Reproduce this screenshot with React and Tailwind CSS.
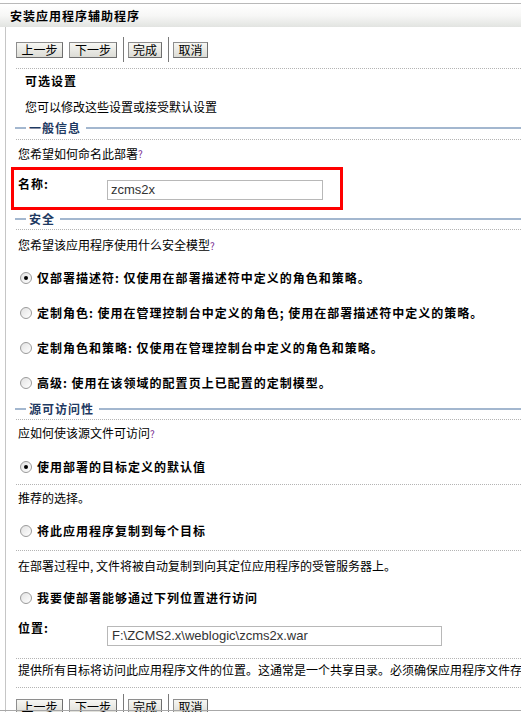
import React from "react";

const cjk = { fontFamily: '"Noto Sans CJK SC", "Noto Sans", sans-serif' };

function Btn({ label, w }) {
  return (
    <button
      className={`h-[16px] ${w} border border-[#8e8e8e] border-r-[#6e6e6e] border-b-[#6e6e6e] bg-gradient-to-b from-[#f7f7f3] to-[#dcdcd6] text-[12px] leading-[14px] text-black flex items-center justify-center`}
    >
      {label}
    </button>
  );
}

function ButtonBar() {
  return (
    <div className="flex items-center h-[25px]">
      <Btn label="上一步" w="w-[47px]" />
      <div className="w-[6px]" />
      <Btn label="下一步" w="w-[48px]" />
      <div className="w-[1px] h-[25px] bg-[#7a7a7a] ml-[6px] mr-[4px]" />
      <Btn label="完成" w="w-[34px]" />
      <div className="w-[1px] h-[25px] bg-[#7a7a7a] ml-[6px] mr-[4px]" />
      <Btn label="取消" w="w-[35px]" />
    </div>
  );
}

function Dotted() {
  return <div className="border-t border-dotted border-[#b4b4b4] h-0" />;
}

function Section({ title }) {
  return (
    <div className="flex items-center h-[16px] -ml-[1px]">
      <div className="w-[11px] h-[2px] bg-[#a3b7cf]" />
      <span className="ml-[3px] mr-[5px] font-bold text-[12px] tracking-[1px] text-[#1f3a62]">
        {title}
      </span>
      <div className="flex-1 h-[2px] bg-[#a3b7cf]" />
    </div>
  );
}

function Help() {
  return <span className="text-[10px] text-[#7a2f92]">?</span>;
}

function Radio({ checked, label, h }) {
  return (
    <div className={`flex items-center ${h} pl-[4px]`}>
      <span className="w-[12px] h-[12px] rounded-full border border-[#9a9a9a] bg-gradient-to-br from-[#e2e2e2] to-white flex items-center justify-center">
        {checked && <span className="w-[4px] h-[4px] rounded-full bg-black" />}
      </span>
      <span className="ml-[5px] font-bold text-[12px] tracking-[1px] text-black whitespace-nowrap">
        {label}
      </span>
    </div>
  );
}

function Text({ children, h, cls = "" }) {
  return (
    <div className={`flex items-center ${h} pl-[2px] text-[12px] text-black whitespace-nowrap ${cls}`}>
      {children}
    </div>
  );
}

export default function App() {
  return (
    <div className="w-[521px] h-[712px] overflow-hidden bg-white relative" style={cjk}>
      {/* title bar */}
      <div className="mt-[3px] border-t border-[#b9b9b9] h-[24px] bg-gradient-to-b from-white via-[#f7f7f6] to-[#e2e4e1] flex items-center pl-[10px]">
        <span className="font-bold text-[12px] tracking-[1px] text-black">安装应用程序辅助程序</span>
      </div>

      <div className="ml-[5px] border-l border-[#c6c6c6] pl-[10px] h-[685px]">
        <div className="pt-[10px]">
          <ButtonBar />
        </div>
        <div className="mt-[6px]">
          <Dotted />
        </div>
        <div className="h-[24px] flex items-center pl-[9px] font-bold text-[12px] tracking-[1px]">可选设置</div>
        <div className="h-[26px] flex items-center pl-[9px] text-[12px] mt-[1px]">您可以修改这些设置或接受默认设置</div>

        {/* 一般信息 */}
        <Section title="一般信息" />
        <div className="mt-[3px]">
          <Dotted />
        </div>
        <Text h="h-[27px]">
          您希望如何命名此部署<Help />
        </Text>
        <div className="-ml-[5px] w-[332px] h-[43px] border-[3px] border-[#ff0000] flex items-start pl-[4px] pt-[8px]">
          <span className="w-[89px] font-bold text-[12px] leading-[12px] tracking-[1px]">名称:</span>
          <div className="mt-[2px] w-[216px] h-[20px] border border-[#b8b8b8] flex items-center pl-[3px]">
            <span className="text-[13px] text-[#333]" style={{ fontFamily: '"Liberation Sans", Arial, sans-serif' }}>
              zcms2x
            </span>
          </div>
        </div>

        {/* 安全 */}
        <div className="mt-[1px]">
          <Section title="安全" />
        </div>
        <div className="mt-[2px]">
          <Dotted />
        </div>
        <Text h="h-[30px]">
          您希望该应用程序使用什么安全模型<Help />
        </Text>
        <Radio h="h-[35px]" checked label="仅部署描述符: 仅使用在部署描述符中定义的角色和策略。" />
        <Radio h="h-[35px]" label="定制角色: 使用在管理控制台中定义的角色; 使用在部署描述符中定义的策略。" />
        <Radio h="h-[35px]" label="定制角色和策略: 仅使用在管理控制台中定义的角色和策略。" />
        <Radio h="h-[35px]" label="高级: 使用在该领域的配置页上已配置的定制模型。" />

        {/* 源可访问性 */}
        <div className="mt-[1px]">
          <Section title="源可访问性" />
        </div>
        <div className="mt-[2px]">
          <Dotted />
        </div>
        <Text h="h-[26px]">
          应如何使该源文件可访问<Help />
        </Text>
        <div className="pt-[4px]">
          <Radio h="h-[34px]" checked label="使用部署的目标定义的默认值" />
        </div>
        <Dotted />
        <Text h="h-[26px]">推荐的选择。</Text>
        <Radio h="h-[39px]" label="将此应用程序复制到每个目标" />
        <Dotted />
        <Text h="h-[30px]">在部署过程中, 文件将被自动复制到向其定位应用程序的受管服务器上。</Text>
        <Radio h="h-[34px]" label="我要使部署能够通过下列位置进行访问" />
        <div className="h-[43px] flex items-start pl-[2px] pt-[7px]">
          <span className="w-[89px] font-bold text-[12px] leading-[12px] tracking-[1px]">位置:</span>
          <div className="mt-[4px] w-[335px] h-[20px] border border-[#b8b8b8] flex items-center pl-[4px]">
            <span className="text-[13px] text-[#333]" style={{ fontFamily: '"Liberation Sans", Arial, sans-serif' }}>
              F:\ZCMS2.x\weblogic\zcms2x.war
            </span>
          </div>
        </div>
        <Dotted />
        <Text h="h-[28px]" cls="pb-[6px]">
          提供所有目标将访问此应用程序文件的位置。这通常是一个共享目录。必须确保应用程序文件存在于此位置, 并且每个目标都可以访问该位置。
        </Text>
        <Dotted />
        <div className="mt-[6px]">
          <ButtonBar />
        </div>
      </div>

      {/* bottom frame edge */}
      <div className="absolute left-0 right-0 bottom-[1px] h-[1px] bg-[#a8a8a8]" />
    </div>
  );
}
